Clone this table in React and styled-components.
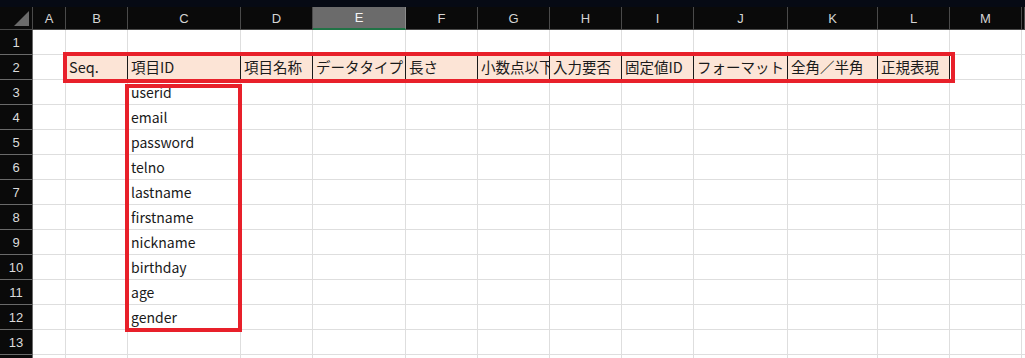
import React from "react";
import styled, { createGlobalStyle, css } from "styled-components";

const COLS = ["A", "B", "C", "D", "E", "F", "G", "H", "I", "J", "K", "L", "M", ""];
const WIDTHS = "33px 33px 62px 113px 72px 93px 72px 72px 72px 72px 94px 90px 72px 72px 1fr";

const HEADERS = ["Seq.", "項目ID", "項目名称", "データタイプ", "長さ", "小数点以下", "入力要否", "固定値ID", "フォーマット", "全角／半角", "正規表現"];
const ITEMS = ["userid", "email", "password", "telno", "lastname", "firstname", "nickname", "birthday", "age", "gender"];

const GlobalStyle = createGlobalStyle`
    html, body {
        margin: 0;
        padding: 0;
        background: #ffffff;
        overflow: hidden;
    }
    body {
        font-family: "Noto Sans CJK JP", "Noto Sans", sans-serif;
    }
`;

const Sheet = styled.div`
    position: relative;
    width: 1025px;
    height: 358px;
    overflow: hidden;
    background: #ffffff;
`;

const TopStrip = styled.div`
    height: 7px;
    background: #060a14;
`;

const Row = styled.div`
    display: grid;
    grid-template-columns: ${WIDTHS};
    height: ${p => p.$h}px;
`;

const Corner = styled.div`
    position: relative;
    background: #0a0a0a;
    border-right: 1px solid #4a4a4a;
    border-bottom: 1px solid #4a4a4a;
    &::after {
        content: "";
        position: absolute;
        right: 3px;
        bottom: 3px;
        width: 0;
        height: 0;
        border-left: 15px solid transparent;
        border-bottom: 15px solid #6b6b6b;
    }
`;

const ColHead = styled.div`
    display: flex;
    align-items: center;
    justify-content: center;
    background: #0a0a0a;
    color: #d4d4d4;
    font-family: "Liberation Sans", sans-serif;
    font-size: 13px;
    border-right: 1px solid #4a4a4a;
    border-bottom: 1px solid #4a4a4a;
    ${p => p.$selected && css`
        background: #6b6b6b;
        color: #f4f4f4;
        border-right-color: #8a8a8a;
        border-bottom: 2px solid #217346;
    `}
`;

const RowHead = styled.div`
    display: flex;
    align-items: center;
    justify-content: center;
    background: #0a0a0a;
    color: #dcdcdc;
    font-family: "Liberation Sans", sans-serif;
    font-size: 13px;
    border-right: 1px solid #6a6a6a;
    border-bottom: 1px solid #6a6a6a;
`;

const Cell = styled.div`
    display: flex;
    align-items: flex-end;
    padding: 0 0 3px 3px;
    box-sizing: border-box;
    overflow: hidden;
    white-space: nowrap;
    font-size: 14px;
    line-height: 18px;
    color: #1a1a1a;
    background: #ffffff;
    border-right: 1px solid #dedede;
    border-bottom: 1px solid #dedede;
    ${p => p.$head && css`
        background: #fce4d6;
        font-size: 14.5px;
        border-right: 1px solid #1a1a1a;
    `}
`;

const Frame = styled.div`
    position: absolute;
    box-sizing: border-box;
    border: 4px solid #e8202a;
    pointer-events: none;
`;

function cellText(r, c) {
    if (r === 2 && c >= 1 && c <= 11) return HEADERS[c - 1];
    if (r >= 3 && r <= 12 && c === 2) return ITEMS[r - 3];
    return "";
}

function App() {
    const rows = Array.from({ length: 14 }, (_, i) => i + 1);

    return (
        <Sheet>
            <GlobalStyle />
            <TopStrip />
            <Row $h={23}>
                <Corner />
                {COLS.map((c, i) => (
                    <ColHead key={i} $selected={c === "E"}>{c}</ColHead>
                ))}
            </Row>
            {rows.map(r => (
                <Row key={r} $h={25}>
                    <RowHead>{r}</RowHead>
                    {COLS.map((_, c) => (
                        <Cell key={c} $head={r === 2 && c >= 1 && c <= 11}>{cellText(r, c)}</Cell>
                    ))}
                </Row>
            ))}
            <Frame style={{ left: 63, top: 52, width: 892, height: 31 }} />
            <Frame style={{ left: 125, top: 84, width: 117, height: 248 }} />
        </Sheet>
    );
}

export default App;
